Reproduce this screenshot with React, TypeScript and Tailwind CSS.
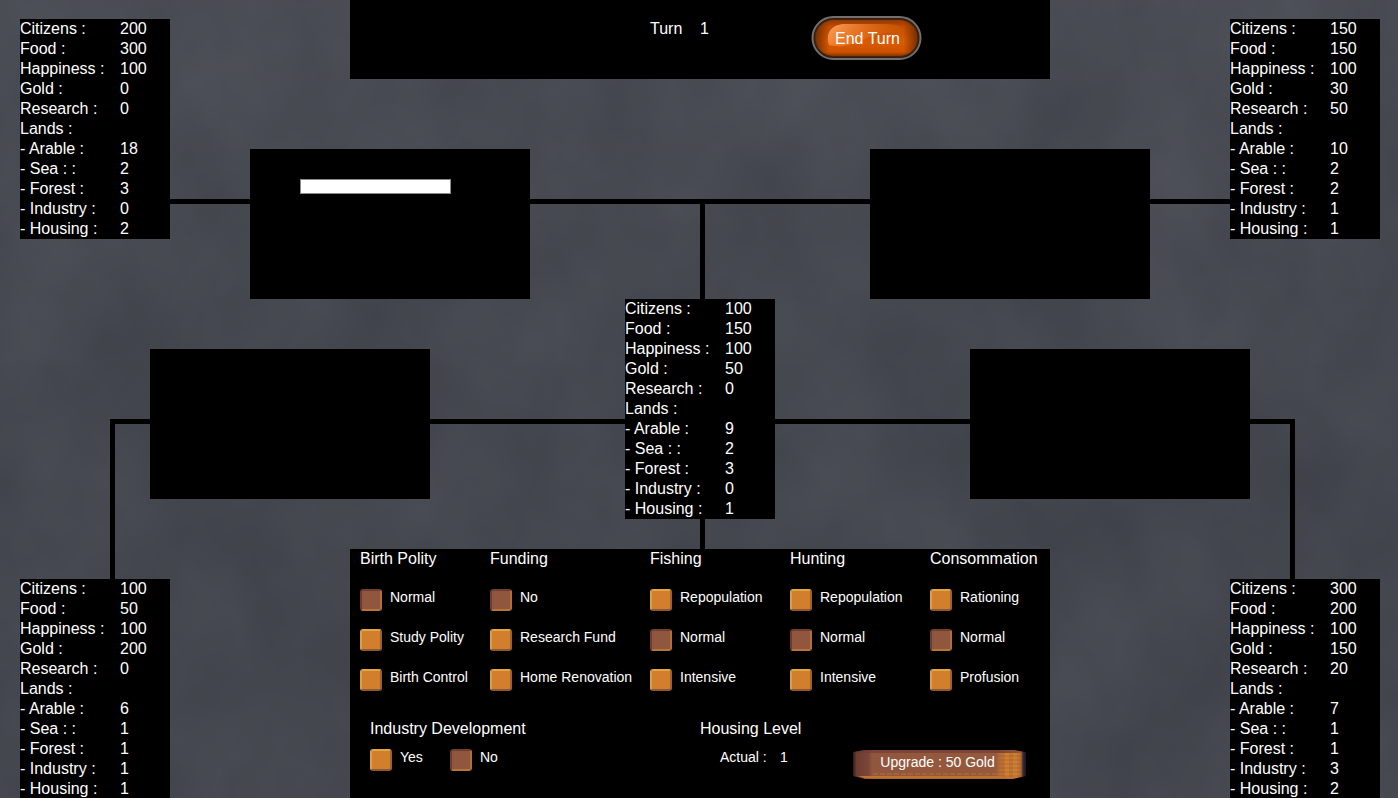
import React from "react";

type Stats = {
  citizens: number;
  food: number;
  happiness: number;
  gold: number;
  research: number;
  arable: number;
  sea: number;
  forest: number;
  industry: number;
  housing: number;
};

function stats(...v: number[]): Stats {
  const [citizens, food, happiness, gold, research, arable, sea, forest, industry, housing] = v;
  return { citizens, food, happiness, gold, research, arable, sea, forest, industry, housing };
}

const northWest = stats(200, 300, 100, 0, 0, 18, 2, 3, 0, 2);
const northEast = stats(150, 150, 100, 30, 50, 10, 2, 2, 1, 1);
const center = stats(100, 150, 100, 50, 0, 9, 2, 3, 0, 1);
const southWest = stats(100, 50, 100, 200, 0, 6, 1, 1, 1, 1);
const southEast = stats(300, 200, 100, 150, 20, 7, 1, 1, 3, 2);

const rows: { label: string; key?: keyof Stats }[] = [
  { label: "Citizens :", key: "citizens" },
  { label: "Food :", key: "food" },
  { label: "Happiness :", key: "happiness" },
  { label: "Gold :", key: "gold" },
  { label: "Research :", key: "research" },
  { label: "Lands :" },
  { label: "- Arable :", key: "arable" },
  { label: "- Sea : :", key: "sea" },
  { label: "- Forest :", key: "forest" },
  { label: "- Industry :", key: "industry" },
  { label: "- Housing :", key: "housing" },
];

function CountryPanel({ data }: { data: Stats }) {
  return (
    <table className="w-[150px] shrink-0 table-fixed border-collapse bg-black leading-5">
      <tbody>
        {rows.map((row) => (
          <tr key={row.label}>
            <th scope="row" className="w-[100px] p-0 text-left font-normal whitespace-nowrap">
              {row.label}
            </th>
            <td className="p-0">{row.key ? data[row.key] : null}</td>
          </tr>
        ))}
      </tbody>
    </table>
  );
}

function TradeBox({ children }: { children?: React.ReactNode }) {
  return <section className="h-[150px] w-[280px] shrink-0 bg-black px-[50px] pt-[30px]">{children}</section>;
}

function Option({ name, label, checked }: { name: string; label: string; checked?: boolean }) {
  return (
    <label className="flex items-start gap-2 text-sm leading-4 whitespace-nowrap">
      <input
        type="radio"
        name={name}
        defaultChecked={checked}
        className="size-[22px] shrink-0 appearance-none rounded-[3px] border-2 border-t-[#e0a844] border-r-[#9c6038] border-b-[#8f5636] border-l-[#dba046] bg-[#d17f2c] checked:border-t-[#70402f] checked:border-r-[#b06f3c] checked:border-b-[#b87538] checked:border-l-[#6a3b2e] checked:bg-[#91573e]"
      />
      {label}
    </label>
  );
}

const policies = [
  { title: "Birth Polity", options: ["Normal", "Study Polity", "Birth Control"], selected: 0 },
  { title: "Funding", options: ["No", "Research Fund", "Home Renovation"], selected: 0 },
  { title: "Fishing", options: ["Repopulation", "Normal", "Intensive"], selected: 1 },
  { title: "Hunting", options: ["Repopulation", "Normal", "Intensive"], selected: 1 },
  { title: "Consommation", options: ["Rationing", "Normal", "Profusion"], selected: 1 },
];

function StoneTexture() {
  return (
    <svg className="absolute inset-0 -z-10 size-full" aria-hidden="true">
      <defs>
        <filter id="stone" x="0" y="0" width="100%" height="100%" colorInterpolationFilters="sRGB">
          <feTurbulence type="fractalNoise" baseFrequency="0.009 0.007" numOctaves="4" seed="7" />
          <feColorMatrix values="0.06 0 0 0 0.240  0.06 0 0 0 0.248  0.06 0 0 0 0.280  0 0 0 0 1" />
        </filter>
        <linearGradient id="stone-light" x1="0" y1="0" x2="0" y2="1">
          <stop offset="0" stopColor="#fff" stopOpacity="0.03" />
          <stop offset="0.5" stopColor="#fff" stopOpacity="0" />
        </linearGradient>
      </defs>
      <rect width="100%" height="100%" filter="url(#stone)" />
      <rect width="100%" height="100%" fill="url(#stone-light)" />
    </svg>
  );
}

function EndTurnButton() {
  return (
    <button type="button" className="relative isolate h-11 w-[111px] rounded-full pt-0.5 pl-0.5 leading-5">
      <svg viewBox="0 0 111 44" className="absolute inset-0 -z-10 size-full" aria-hidden="true">
        <defs>
          <linearGradient id="ember" x1="0" y1="0" x2="0" y2="1">
            <stop offset="0" stopColor="#8f3700" />
            <stop offset="0.2" stopColor="#c24d00" />
            <stop offset="0.6" stopColor="#d95b02" />
            <stop offset="0.88" stopColor="#cf5200" />
            <stop offset="1" stopColor="#7c3000" />
          </linearGradient>
          <linearGradient id="ember-sides" x1="0" y1="0" x2="1" y2="0">
            <stop offset="0" stopColor="#5a2200" stopOpacity="0.8" />
            <stop offset="0.14" stopColor="#5a2200" stopOpacity="0" />
            <stop offset="0.86" stopColor="#5a2200" stopOpacity="0" />
            <stop offset="1" stopColor="#5a2200" stopOpacity="0.8" />
          </linearGradient>
          <linearGradient id="gloss" x1="0" y1="0" x2="1" y2="0.35">
            <stop offset="0" stopColor="#ffab66" stopOpacity="0.95" />
            <stop offset="0.4" stopColor="#f98a3a" stopOpacity="0.65" />
            <stop offset="1" stopColor="#e06508" stopOpacity="0.1" />
          </linearGradient>
        </defs>
        <rect x="1.5" y="1" width="108" height="42" rx="21" fill="#2a211c" stroke="#746f6a" strokeWidth="2" />
        <rect x="4" y="3.5" width="103" height="37" rx="18.5" fill="url(#ember)" />
        <rect x="4" y="3.5" width="103" height="37" rx="18.5" fill="url(#ember-sides)" stroke="#4a200a" />
        <path d="M18 29C14 17 21 8 34 8H76C86 8 93 11 94 17C80 14 64 18 50 25C38 31 24 31 18 29Z" fill="url(#gloss)" />
      </svg>
      End Turn
    </button>
  );
}

function UpgradeButton() {
  return (
    <button type="button" className="relative isolate h-[30px] w-[173px] pr-1 pb-1 text-sm leading-4">
      <svg viewBox="0 0 173 30" className="absolute inset-0 -z-10 size-full" aria-hidden="true">
        <defs>
          <linearGradient id="copper" x1="0" y1="0" x2="1" y2="0">
            <stop offset="0" stopColor="#2b1822" />
            <stop offset="0.02" stopColor="#6d3b31" />
            <stop offset="0.09" stopColor="#7a4637" />
            <stop offset="0.11" stopColor="#91573e" />
            <stop offset="0.84" stopColor="#95593c" />
            <stop offset="0.91" stopColor="#b86d32" />
            <stop offset="0.95" stopColor="#cd7d2c" />
            <stop offset="0.975" stopColor="#7b4a35" />
            <stop offset="0.985" stopColor="#33263c" />
            <stop offset="1" stopColor="#191420" />
          </linearGradient>
          <linearGradient id="weave-fade" x1="0" y1="0" x2="1" y2="0">
            <stop offset="0.82" stopColor="#fff" stopOpacity="0" />
            <stop offset="0.88" stopColor="#fff" />
            <stop offset="0.96" stopColor="#fff" />
            <stop offset="0.98" stopColor="#fff" stopOpacity="0" />
          </linearGradient>
          <pattern id="weave" width="8" height="4" patternUnits="userSpaceOnUse">
            <rect width="8" height="4" fill="#c37630" />
            <rect width="4" height="2" fill="#cd7e2f" />
            <rect x="4" y="2" width="4" height="2" fill="#b46c34" />
          </pattern>
          <mask id="weave-mask">
            <rect width="173" height="30" fill="url(#weave-fade)" />
          </mask>
        </defs>
        <path d="M0 3L12 1H160L173 3V27L160 30H12L0 27Z" fill="url(#copper)" />
        <path d="M2 3L12 1H160L166 2V4H2Z" fill="#6b3a35" fillOpacity="0.6" />
        <path d="M5 27H166L159 29.500H12Z" fill="#c0722f" />
        <path d="M20 25H158" stroke="#ad6833" strokeWidth="1.500" strokeDasharray="5 2" fill="none" />
        <rect y="4" width="173" height="24" fill="url(#weave)" mask="url(#weave-mask)" />
      </svg>
      Upgrade : 50 Gold
    </button>
  );
}

export default function App() {
  return (
    <div className="relative isolate min-h-screen min-w-[1280px] overflow-hidden bg-[#474951] pr-[18px] pl-5 font-['Liberation_Sans',Arial,sans-serif] text-base text-white">
      <StoneTexture />

      <div className="flex items-start">
        <div className="pt-[19px]">
          <CountryPanel data={northWest} />
        </div>
        <div className="flex-1">
          <header className="mx-auto flex h-[79px] w-[700px] items-start bg-black pl-[300px]">
            <p className="flex pt-[19px] leading-5">
              <span className="w-[50px]">Turn</span>
              <span className="w-[111px]">1</span>
            </p>
            <div className="pt-4">
              <EndTurnButton />
            </div>
          </header>
          <div className="flex pt-[70px]">
            <div className="mt-[50px] h-[5px] flex-1 basis-0 bg-black" />
            <TradeBox>
              <input
                type="text"
                aria-label="Offer"
                className="block h-[15px] w-[151px] border border-[#8a8a8a] bg-white px-1 text-xs text-black"
              />
            </TradeBox>
            <div className="flex w-[340px] flex-col pt-[50px]">
              <div className="h-[5px] bg-black" />
              <div className="ml-[50%] w-[5px] flex-1 bg-black" />
            </div>
            <TradeBox />
            <div className="mt-[50px] h-[5px] flex-1 basis-0 bg-black" />
          </div>
        </div>
        <div className="pt-[19px]">
          <CountryPanel data={northEast} />
        </div>
      </div>

      <div className="mr-[85px] ml-[90px] flex h-[250px]">
        <div className="mt-[120px] w-10 border-t-5 border-l-5 border-black" />
        <div className="pt-[50px]">
          <TradeBox />
        </div>
        <div className="mt-[120px] h-[5px] flex-1 bg-black" />
        <div className="flex flex-col">
          <CountryPanel data={center} />
          <div className="ml-[50%] w-[5px] flex-1 bg-black" />
        </div>
        <div className="mt-[120px] h-[5px] flex-1 bg-black" />
        <div className="pt-[50px]">
          <TradeBox />
        </div>
        <div className="mt-[120px] w-[45px] border-t-5 border-r-5 border-black" />
      </div>

      <div className="flex justify-between">
        <div>
          <div className="ml-[90px] h-[30px] w-[5px] bg-black" />
          <CountryPanel data={southWest} />
        </div>

        <main className="w-[700px] bg-black">
          <div className="grid grid-cols-[130px_160px_140px_140px_auto] pl-2.5">
            {policies.map((policy) => (
              <fieldset key={policy.title} className="min-w-0">
                <legend className="leading-5">{policy.title}</legend>
                <div className="flex flex-col gap-[18px] pt-5">
                  {policy.options.map((option, i) => (
                    <Option key={option} name={policy.title} label={option} checked={i === policy.selected} />
                  ))}
                </div>
              </fieldset>
            ))}
          </div>

          <div className="flex items-start pt-7 pl-5">
            <fieldset className="w-[330px]">
              <legend className="leading-5">Industry Development</legend>
              <div className="grid grid-cols-[80px_80px] pt-2.5">
                <Option name="industry" label="Yes" />
                <Option name="industry" label="No" checked />
              </div>
            </fieldset>
            <section>
              <h2 className="leading-5">Housing Level</h2>
              <div className="flex items-start pt-2.5 pl-5">
                <p className="flex text-sm leading-4">
                  <span className="w-[60px]">Actual :</span>
                  <span className="w-[73px]">1</span>
                </p>
                <UpgradeButton />
              </div>
            </section>
          </div>
        </main>

        <div>
          <div className="ml-[60px] h-[30px] w-[5px] bg-black" />
          <CountryPanel data={southEast} />
        </div>
      </div>
    </div>
  );
}
